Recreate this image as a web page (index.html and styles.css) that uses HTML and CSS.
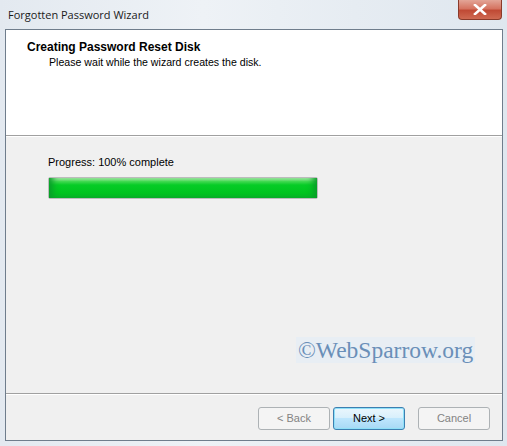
FILE: index.html
```html
<!DOCTYPE html>
<html>
<head>
<meta charset="utf-8">
<link rel="stylesheet" href="styles.css">
</head>
<body>
<div class="window">
  <div class="titlebar">
    <span class="title">Forgotten Password Wizard</span>
    <span class="close"><svg width="14" height="11" viewBox="0 0 14 11"><path d="M2 1 L12 10 M12 1 L2 10" stroke="#fff" stroke-width="2.6" stroke-linecap="square"/></svg></span>
  </div>
  <div class="client">
    <div class="header">
      <div class="h-title">Creating Password Reset Disk</div>
      <div class="h-sub">Please wait while the wizard creates the disk.</div>
    </div>
    <div class="content">
      <div class="progress-label">Progress: 100% complete</div>
      <div class="progress"><div class="bar" style="width:100%"></div></div>
      <div class="watermark">©WebSparrow.org</div>
    </div>
    <div class="footer">
      <button class="btn disabled">&lt; Back</button>
      <button class="btn default">Next &gt;</button>
      <button class="btn disabled cancel">Cancel</button>
    </div>
  </div>
</div>
</body>
</html>
```
FILE: styles.css
```css
html, body { margin: 0; padding: 0; }
body { width: 507px; height: 446px; overflow: hidden; font-family: "Liberation Sans", Arial, sans-serif; }
.window {
  width: 507px; height: 446px; box-sizing: border-box;
  background: linear-gradient(to right, #e3e9f0 0%, #eef2f6 40%, #e6ecf2 70%, #dfe7ef 100%);
  padding: 0 4px 5px 5px;
  display: flex; flex-direction: column;
}
.titlebar { height: 29px; display: flex; align-items: flex-start; }
.title { font-family: "Open Sans", "Noto Sans", sans-serif; font-size: 11px; color: #1a1a1a; margin: 7px 0 0 3px; }
.close {
  margin-left: auto; margin-right: 1px; width: 44px; height: 20px; box-sizing: border-box;
  border: 1px solid #8a3a2a; border-top: 0; border-radius: 0 0 4px 4px;
  background: linear-gradient(to bottom, #e3a597 0%, #d57461 45%, #c04a35 55%, #cf6a52 100%);
  display: flex; align-items: center; justify-content: center;
}
.client {
  flex: 1; border: 1px solid #6f7d8c; background: #f0f0f0;
  display: flex; flex-direction: column;
}
.header {
  height: 106px; background: #fff; border-bottom: 1px solid #a0a0a0;
  box-shadow: 0 1px 0 #fff; padding: 10px 0 0 21px; box-sizing: border-box;
}
.h-title { font-weight: bold; font-size: 12px; color: #000; }
.h-sub { font-size: 10.6px; color: #000; margin: 2px 0 0 22px; }
.content { flex: 1; padding: 20px 0 0 42px; position: relative; }
.progress-label { font-size: 11px; color: #000; }
.progress {
  margin-top: 9px; width: 270px; height: 22px; box-sizing: border-box;
  border: 1px solid #bcbcbc; background: #e6e6e6; border-radius: 2px;
}
.bar {
  height: 100%;
  background: linear-gradient(to bottom, #b5f0b5 0%, #3fd84f 18%, #06cc26 35%, #00c41f 75%, #0ab22a 100%);
  box-shadow: inset 8px 0 6px -4px #0a9e2a, inset -8px 0 6px -4px #0a9e2a;
}
.watermark {
  position: absolute; left: 290px; top: 201px;
  font-family: "Liberation Serif", "Times New Roman", serif; font-size: 23.5px; line-height: 26px;
  color: #6a8fb8; background: #e8eef4; padding: 0 2px;
}
.footer {
  height: 47px; border-top: 1px solid #a0a0a0; box-shadow: inset 0 1px 0 #fff;
  display: flex; align-items: center; padding: 2px 0 0 252px; box-sizing: border-box;
}
.btn {
  width: 72px; height: 23px; box-sizing: border-box; margin: 0 3px 0 0; padding: 0;
  font-family: "Liberation Sans", Arial, sans-serif; font-size: 11px;
  border: 1px solid #adb2b5; border-radius: 3px; background: #f4f4f4; color: #838383;
}
.btn.default {
  border: 1px solid #3c7fb1; color: #000;
  background: linear-gradient(to bottom, #eaf6fd 0%, #d9f0fc 45%, #bee6fd 50%, #a7d9f5 100%);
  box-shadow: inset 0 0 0 1px #8fe0f8;
}
.btn.cancel { margin-left: 10px; }
```
